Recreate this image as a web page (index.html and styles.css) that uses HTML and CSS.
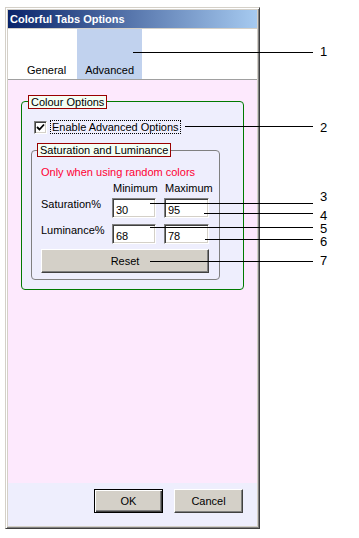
FILE: index.html
```html
<!DOCTYPE html>
<html lang="en">
<head>
  <meta charset="UTF-8">
  <meta name="viewport" content="width=device-width, initial-scale=1.0">
  <title>Colorful Tabs Options</title>
  <link rel="stylesheet" href="styles.css">
</head>
<body>
  <div class="page">
    <div class="window">
      <div class="titlebar">Colorful Tabs Options</div>
      <div class="tabstrip">
        <span class="tab">General</span>
        <span class="tab active">Advanced</span>
      </div>
      <div class="panel">
        <div class="group colour">
          <span class="legend">Colour Options</span>
          <label class="check">
            <span class="box">
              <svg width="9" height="9" viewBox="0 0 9 9"><path d="M1 4 L3.5 6.5 L8 1.5" fill="none" stroke="#000" stroke-width="1.8"/></svg>
            </span>
            <span class="focus">Enable Advanced Options</span>
          </label>
          <div class="group inner">
            <span class="legend">Saturation and Luminance</span>
            <p class="note">Only when using random colors</p>
            <div class="grid">
              <span></span>
              <span class="head">Minimum</span>
              <span class="head">Maximum</span>
              <span class="lbl">Saturation%</span>
              <input class="field" type="text" value="30">
              <input class="field" type="text" value="95">
              <span class="lbl">Luminance%</span>
              <input class="field" type="text" value="68">
              <input class="field" type="text" value="78">
            </div>
            <button class="btn reset">Reset</button>
          </div>
        </div>
      </div>
      <div class="footer">
        <button class="btn default">OK</button>
        <button class="btn">Cancel</button>
      </div>
    </div>

    <svg class="callouts" width="359" height="538" viewBox="0 0 359 538">
      <g stroke="#000" stroke-width="1">
        <line x1="133" y1="52.5" x2="313" y2="52.5"/>
        <line x1="185" y1="126.5" x2="313" y2="126.5"/>
        <line x1="150" y1="203.5" x2="313" y2="203.5"/>
        <line x1="204" y1="213.5" x2="313" y2="213.5"/>
        <line x1="150" y1="227.5" x2="313" y2="227.5"/>
        <line x1="205" y1="239.5" x2="313" y2="239.5"/>
        <line x1="150" y1="261.5" x2="313" y2="261.5"/>
      </g>
      <g class="nums">
        <text x="320" y="56">1</text>
        <text x="320" y="132">2</text>
        <text x="320" y="201">3</text>
        <text x="320" y="220">4</text>
        <text x="320" y="233">5</text>
        <text x="320" y="246">6</text>
        <text x="320" y="265">7</text>
      </g>
    </svg>
  </div>
</body>
</html>
```
FILE: styles.css
```css
:root {
  --face: #d4d0c8;
  --shadow: #808080;
  --dark: #404040;
  --pink: #fde9fd;
  --lavender: #eeeefd;
  --green: #007a00;
  --maroon: #990000;
}
* {
  margin: 0;
  padding: 0;
  box-sizing: border-box;
}
body {
  background: #fff;
  font-family: 'Liberation Sans', Arial, sans-serif;
  font-size: 11px;
  color: #000;
}
.page {
  position: relative;
  width: 359px;
  height: 538px;
  padding: 7px 0 0 5px;
}
.window {
  width: 255px;
  height: 522px;
  display: flex;
  flex-direction: column;
  background: var(--face);
  border: 1px solid;
  border-color: var(--face) var(--dark) var(--dark) var(--face);
  box-shadow: inset 1px 1px #fff, inset -1px -1px var(--shadow);
  padding: 2px;
}
.titlebar {
  height: 18px;
  line-height: 18px;
  padding-left: 2px;
  color: #fff;
  font-weight: bold;
  font-size: 11px;
  background: linear-gradient(to right, #0a246a, #a6caf0);
}
.tabstrip {
  margin-top: 1px;
  height: 51px;
  background: #fff;
  border-bottom: 1px solid #a0a0a0;
  display: flex;
  align-items: stretch;
  gap: 3px;
  padding-left: 11px;
}
.tab {
  display: flex;
  align-items: flex-end;
  padding: 0 8px 2px;
  line-height: 13px;
}
.tab.active {
  background: #c1d2ee;
}
.panel {
  flex: 1;
  background: var(--pink);
  padding: 21px 0 0 13px;
}
.group {
  display: flex;
  flex-direction: column;
  border: 1px solid var(--green);
  border-radius: 4px;
  background: var(--lavender);
}
.colour {
  width: 223px;
  height: 189px;
}
.legend {
  align-self: flex-start;
  height: 14px;
  line-height: 12px;
  margin: -7px 0 0 6px;
  padding: 0 2px;
  border: 1px solid var(--maroon);
  background: #f4fff4;
  white-space: nowrap;
}
.check {
  display: flex;
  align-items: center;
  gap: 3px;
  margin: 11px 0 0 12px;
}
.box {
  width: 13px;
  height: 13px;
  display: flex;
  align-items: center;
  justify-content: center;
  background: #fff;
  border: 1px solid;
  border-color: var(--shadow) #fff #fff var(--shadow);
  box-shadow: inset 1px 1px var(--dark), inset -1px -1px var(--face);
}
.focus {
  border: 1px dotted #000;
  line-height: 12px;
  padding: 0 1px;
}
.inner {
  width: 189px;
  height: 130px;
  margin: 16px 0 0 9px;
  border-color: var(--shadow);
  padding: 0 0 0 9px;
}
.inner .legend {
  margin: -8px 0 0 -4px;
}
.note {
  color: #ff0033;
  line-height: 13px;
  margin-top: 9px;
}
.grid {
  display: grid;
  grid-template-columns: 63px 44px 45px;
  column-gap: 8px;
  row-gap: 6px;
  margin-top: 3px;
}
.head {
  line-height: 13px;
  padding-left: 1px;
  margin-bottom: -3px;
}
.lbl {
  align-self: start;
  line-height: 13px;
}
.field {
  width: 100%;
  height: 20px;
  font: inherit;
  padding: 3px 0 0 3px;
  background: #fff;
  border: 1px solid;
  border-color: var(--shadow) #fff #fff var(--shadow);
  box-shadow: inset 1px 1px var(--dark), inset -1px -1px var(--face);
  outline: none;
}
.btn {
  font: inherit;
  background: var(--face);
  border: 1px solid;
  border-color: #fff var(--dark) var(--dark) #fff;
  box-shadow: inset -1px -1px var(--shadow);
  color: #000;
}
.reset {
  width: 168px;
  height: 24px;
  margin-top: 5px;
}
.footer {
  height: 43px;
  background: var(--lavender);
  display: flex;
  justify-content: flex-end;
  align-items: flex-start;
  gap: 11px;
  padding: 6px 14px 0 0;
}
.footer .btn {
  width: 69px;
  height: 24px;
}
.btn.default {
  border: 1px solid #000;
  box-shadow: inset 1px 1px #fff, inset -1px -1px var(--dark), inset -2px -2px var(--shadow);
}
.callouts {
  position: absolute;
  left: 0;
  top: 0;
  pointer-events: none;
}
.nums {
  font-family: 'Liberation Sans', Arial, sans-serif;
  font-size: 13px;
  fill: #000;
}
```
